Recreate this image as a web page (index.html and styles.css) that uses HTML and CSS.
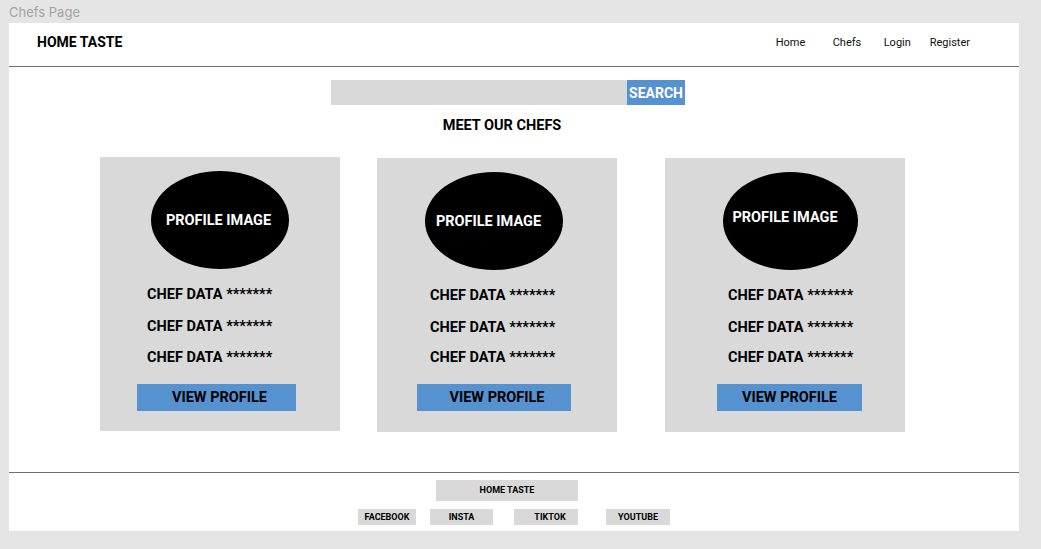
FILE: index.html
```html
<!DOCTYPE html>
<html lang="en">
<head>
<meta charset="utf-8">
<title>Chefs Page</title>
<link rel="stylesheet" href="styles.css">
</head>
<body>
<div class="page-label">Chefs Page</div>
<div class="frame">
  <header class="header">
    <div class="brand">HOME TASTE</div>
    <nav class="nav">
      <a class="nav-link nav-home">Home</a>
      <a class="nav-link nav-chefs">Chefs</a>
      <a class="nav-link nav-login">Login</a>
      <a class="nav-link">Register</a>
    </nav>
  </header>
  <main class="main">
    <div class="search">
      <div class="search-input"></div>
      <div class="search-btn">SEARCH</div>
    </div>
    <h1 class="title">MEET OUR CHEFS</h1>
    <div class="cards">
      <div class="card card-1">
        <div class="avatar">PROFILE IMAGE</div>
        <div class="data">
          <div class="data-line">CHEF DATA *******</div>
          <div class="data-line">CHEF DATA *******</div>
          <div class="data-line">CHEF DATA *******</div>
        </div>
        <div class="btn">VIEW PROFILE</div>
      </div>
      <div class="card card-2">
        <div class="avatar">PROFILE IMAGE</div>
        <div class="data">
          <div class="data-line">CHEF DATA *******</div>
          <div class="data-line">CHEF DATA *******</div>
          <div class="data-line">CHEF DATA *******</div>
        </div>
        <div class="btn">VIEW PROFILE</div>
      </div>
      <div class="card card-3">
        <div class="avatar">PROFILE IMAGE</div>
        <div class="data">
          <div class="data-line">CHEF DATA *******</div>
          <div class="data-line">CHEF DATA *******</div>
          <div class="data-line">CHEF DATA *******</div>
        </div>
        <div class="btn">VIEW PROFILE</div>
      </div>
    </div>
  </main>
  <footer class="footer">
    <div class="foot-brand">HOME TASTE</div>
    <div class="socials">
      <div class="social s-fb">FACEBOOK</div>
      <div class="social s-insta">INSTA</div>
      <div class="social s-tiktok">TIKTOK</div>
      <div class="social s-yt">YOUTUBE</div>
    </div>
  </footer>
</div>
</body>
</html>
```

FILE: styles.css
```css
* { box-sizing: border-box; }
html, body { margin: 0; padding: 0; }
body {
  background: #e5e5e5;
  width: 1041px;
  height: 549px;
  overflow: hidden;
  font-family: Roboto, "Liberation Sans", sans-serif;
  color: #000;
}
.page-label {
  height: 23px;
  padding: 4px 0 0 9px;
  font-family: Inter, "Noto Sans", sans-serif;
  font-size: 13px;
  line-height: 16px;
  color: #a3a3a3;
}
.frame {
  margin-left: 9px;
  width: 1010px;
  height: 508px;
  background: #fff;
  display: flex;
  flex-direction: column;
}
.header {
  height: 44px;
  border-bottom: 1px solid #707070;
  display: flex;
  justify-content: space-between;
  align-items: flex-start;
  padding: 11px 49px 0 28px;
}
.brand {
  font-weight: 700;
  font-size: 14px;
  line-height: 16px;
}
.nav {
  display: flex;
  padding-top: 2px;
}
.nav-link {
  font-size: 11px;
  line-height: 13px;
  color: #111;
}
.nav-home { width: 57px; }
.nav-chefs { width: 51px; }
.nav-login { width: 46px; }
.main {
  flex: 1;
  padding-top: 13px;
}
.search {
  display: flex;
  margin-left: 322px;
  height: 25px;
}
.search-input {
  width: 296px;
  background: #d9d9d9;
}
.search-btn {
  width: 58px;
  background: #5592cf;
  color: #fff;
  font-weight: 700;
  font-size: 14px;
  line-height: 26px;
  text-align: center;
}
.title {
  margin: 12px 0 0;
  padding-right: 24px;
  text-align: center;
  font-size: 14.5px;
  line-height: 17px;
  font-weight: 700;
}
.cards {
  display: flex;
  margin-top: 23px;
  padding-left: 91px;
  gap: 37px;
}
.card {
  width: 240px;
  height: 274px;
  background: #d9d9d9;
  padding-top: 14px;
  display: flex;
  flex-direction: column;
}
.card-2, .card-3 { margin-top: 1px; }
.card-3 { margin-left: 11px; }
.avatar {
  width: 138px;
  height: 98px;
  border-radius: 50%;
  background: #000;
  color: #fff;
  font-weight: 700;
  font-size: 14.5px;
  display: flex;
  align-items: center;
  justify-content: center;
  align-self: center;
}
.card-1 .avatar { padding-right: 3px; }
.card-2 .avatar { margin-left: -6px; padding-right: 11px; }
.card-3 .avatar { width: 135px; margin-left: 10px; padding-bottom: 7px; padding-right: 10px; }
.data {
  margin-top: 10px;
}
.data-line {
  font-size: 14.5px;
  font-weight: 700;
  line-height: 31.5px;
  white-space: nowrap;
}
.card-1 .data { padding-left: 47px; }
.card-2 .data { padding-left: 53px; }
.card-3 .data { padding-left: 63px; }
.card-2 .data-line:last-child, .card-3 .data-line:last-child { line-height: 30px; }
.btn {
  margin-top: 11px;
  height: 27px;
  background: #5592cf;
  font-weight: 700;
  font-size: 14.5px;
  line-height: 27px;
  text-align: center;
}
.card-1 .btn { margin-top: 10px; margin-left: 37px; width: 159px; padding-left: 6px; }
.card-2 .btn { margin-left: 40px; width: 154px; padding-left: 6px; }
.card-3 .btn { margin-left: 52px; width: 145px; }
.footer {
  height: 59px;
  border-top: 1px solid #707070;
  padding-top: 7px;
}
.foot-brand {
  margin-left: 427px;
  width: 142px;
  height: 21px;
  background: #d9d9d9;
  font-size: 9px;
  font-weight: 700;
  line-height: 21px;
  text-align: center;
}
.socials {
  display: flex;
  margin-top: 8px;
  padding-left: 349px;
}
.social {
  height: 16px;
  background: #d9d9d9;
  font-size: 9px;
  font-weight: 700;
  line-height: 16px;
  text-align: center;
}
.s-fb { width: 58px; }
.s-insta { width: 63px; margin-left: 14px; }
.s-tiktok { width: 64px; margin-left: 21px; padding-left: 8px; }
.s-yt { width: 64px; margin-left: 28px; }
```
